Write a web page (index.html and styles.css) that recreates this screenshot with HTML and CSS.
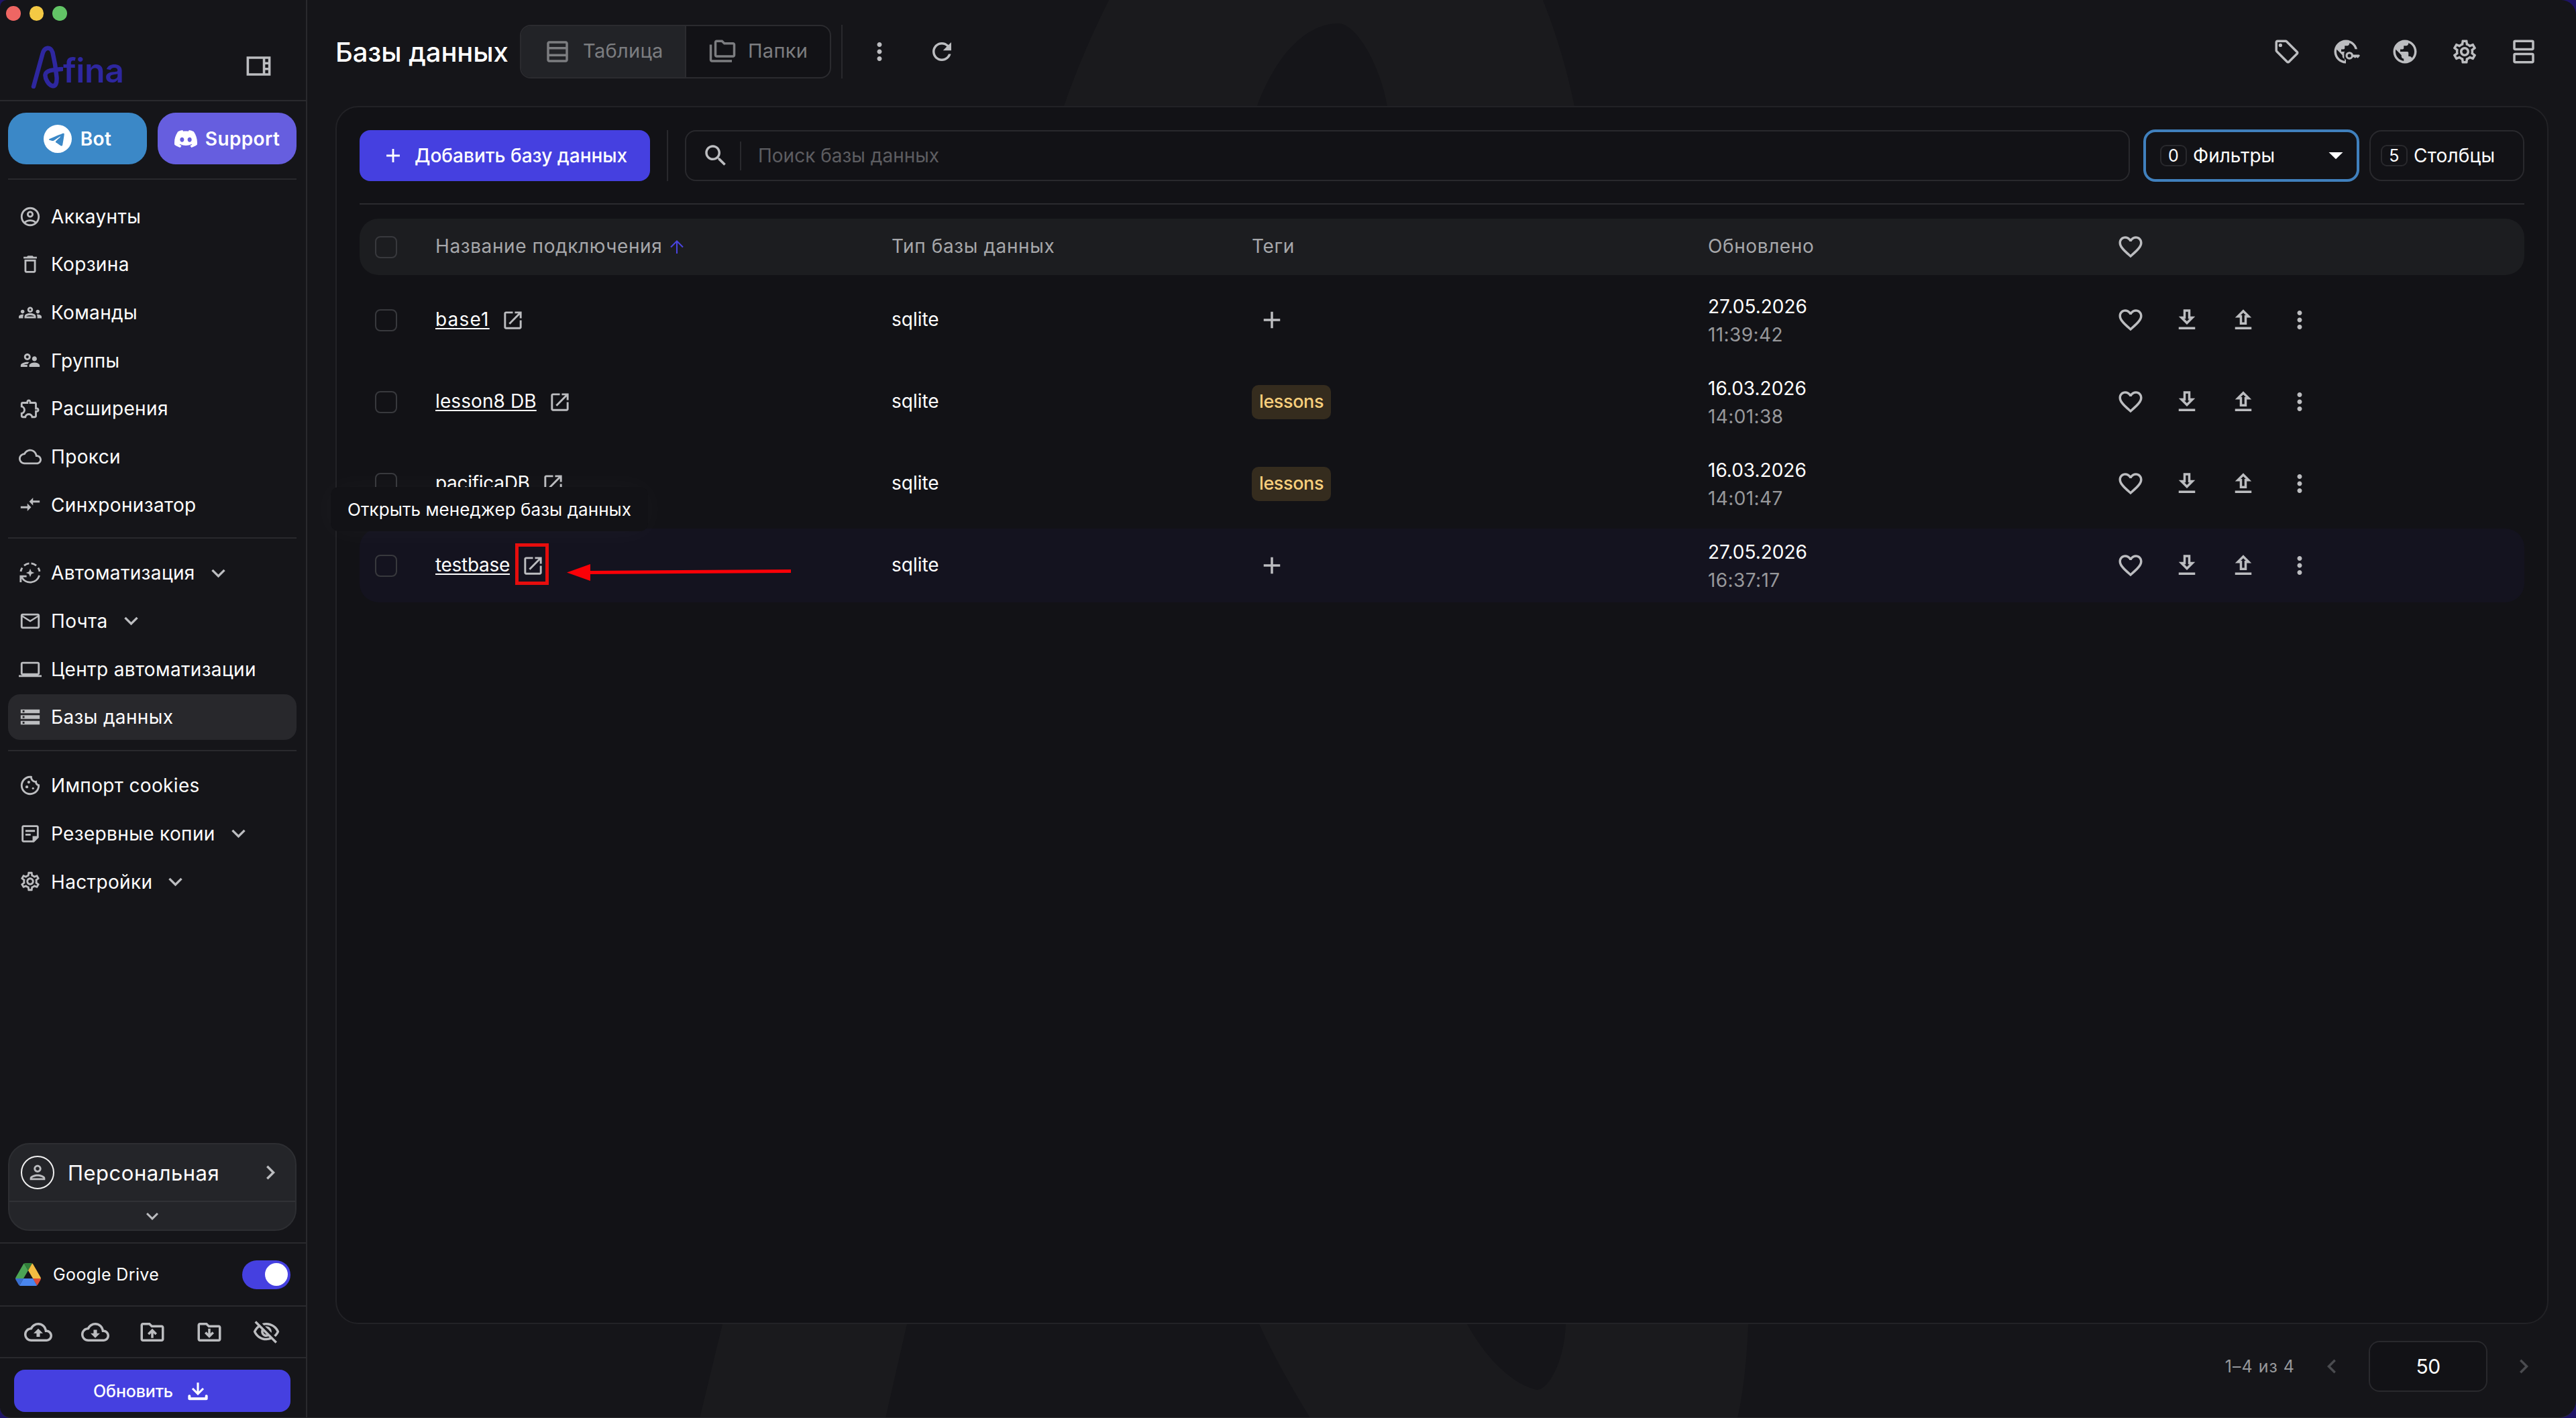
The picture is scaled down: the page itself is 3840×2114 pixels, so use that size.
FILE: index.html
```html
<!DOCTYPE html>
<html lang="ru">
<head>
<meta charset="utf-8">
<title>Afina — Базы данных</title>
<link rel="stylesheet" href="styles.css">
</head>
<body>
<svg class="sprite" aria-hidden="true">
  <symbol id="i-sidebar" viewBox="0 0 24 24"><path d="M2 4v16h20V4H2zm18 4.67h-2.5V6H20v2.67zm-2.5 2H20v2.67h-2.5v-2.67zM4 6h11.5v12H4V6zm13.5 12v-2.67H20V18h-2.5z"/></symbol>
  <symbol id="i-telegram" viewBox="0 0 24 24"><path d="M11.944 0A12 12 0 0 0 0 12a12 12 0 0 0 12 12 12 12 0 0 0 12-12A12 12 0 0 0 12 0a12 12 0 0 0-.056 0zm4.962 7.224c.1-.002.321.023.465.14a.506.506 0 0 1 .171.325c.016.093.036.306.02.472-.18 1.898-.962 6.502-1.36 8.627-.168.9-.499 1.201-.82 1.23-.696.065-1.225-.46-1.9-.902-1.056-.693-1.653-1.124-2.678-1.8-1.185-.78-.417-1.21.258-1.91.177-.184 3.247-2.977 3.307-3.23.007-.032.014-.15-.056-.212s-.174-.041-.249-.024c-.106.024-1.793 1.14-5.061 3.345-.48.33-.913.49-1.302.48-.428-.008-1.252-.241-1.865-.44-.752-.245-1.349-.374-1.297-.789.027-.216.325-.437.893-.663 3.498-1.524 5.83-2.529 6.998-3.014 3.332-1.386 4.025-1.627 4.476-1.635z"/></symbol>
  <symbol id="i-discord" viewBox="0 0 24 24"><path d="M20.317 4.3698a19.7913 19.7913 0 00-4.8851-1.5152.0741.0741 0 00-.0785.0371c-.211.3753-.4447.8648-.6083 1.2495-1.8447-.2762-3.68-.2762-5.4868 0-.1636-.3933-.4058-.8742-.6177-1.2495a.077.077 0 00-.0785-.037 19.7363 19.7363 0 00-4.8852 1.515.0699.0699 0 00-.0321.0277C.5334 9.0458-.319 13.5799.0992 18.0578a.0824.0824 0 00.0312.0561c2.0528 1.5076 4.0413 2.4228 5.9929 3.0294a.0777.0777 0 00.0842-.0276c.4616-.6304.8731-1.2952 1.226-1.9942a.076.076 0 00-.0416-.1057c-.6528-.2476-1.2743-.5495-1.8722-.8923a.077.077 0 01-.0076-.1277c.1258-.0943.2517-.1923.3718-.2914a.0743.0743 0 01.0776-.0105c3.9278 1.7933 8.18 1.7933 12.0614 0a.0739.0739 0 01.0785.0095c.1202.099.246.1981.3728.2924a.077.077 0 01-.0066.1276 12.2986 12.2986 0 01-1.873.8914.0766.0766 0 00-.0407.1067c.3604.698.7719 1.3628 1.225 1.9932a.076.076 0 00.0842.0286c1.961-.6067 3.9495-1.5219 6.0023-3.0294a.077.077 0 00.0313-.0552c.5004-5.177-.8382-9.6739-3.5485-13.6604a.061.061 0 00-.0312-.0286zM8.02 15.3312c-1.1825 0-2.1569-1.0857-2.1569-2.419 0-1.3332.9555-2.4189 2.157-2.4189 1.2108 0 2.1757 1.0952 2.1568 2.419 0 1.3332-.9555 2.4189-2.1569 2.4189zm7.9748 0c-1.1825 0-2.1569-1.0857-2.1569-2.419 0-1.3332.9554-2.4189 2.1569-2.4189 1.2108 0 2.1757 1.0952 2.1568 2.419 0 1.3332-.946 2.4189-2.1568 2.4189Z"/></symbol>
  <symbol id="i-account" viewBox="0 0 24 24"><path d="M12 2C6.48 2 2 6.48 2 12s4.48 10 10 10 10-4.48 10-10S17.52 2 12 2zM7.35 18.5C8.66 17.56 10.26 17 12 17s3.34.56 4.65 1.5c-1.31.94-2.91 1.5-4.65 1.5s-3.34-.56-4.65-1.5zm10.79-1.38C16.45 15.8 14.32 15 12 15s-4.45.8-6.14 2.12C4.7 15.73 4 13.95 4 12c0-4.42 3.58-8 8-8s8 3.58 8 8c0 1.95-.7 3.73-1.86 5.12zM12 6c-1.93 0-3.5 1.57-3.5 3.5S10.07 13 12 13s3.5-1.57 3.5-3.5S13.93 6 12 6zm0 5c-.83 0-1.5-.67-1.5-1.5S11.17 8 12 8s1.5.67 1.5 1.5S12.83 11 12 11z"/></symbol>
  <symbol id="i-trash" viewBox="0 0 24 24"><path d="M6 19c0 1.1.9 2 2 2h8c1.1 0 2-.9 2-2V7H6v12zM8 9h8v10H8V9zm7.5-5l-1-1h-5l-1 1H5v2h14V4z"/></symbol>
  <symbol id="i-teams" viewBox="0 0 24 24"><path d="M4 13c1.1 0 2-.9 2-2s-.9-2-2-2-2 .9-2 2 .9 2 2 2zm1.13 1.1C4.76 14.04 4.39 14 4 14c-.99 0-1.93.21-2.78.58C.48 14.9 0 15.62 0 16.43V18h4.5v-1.61c0-.83.23-1.61.63-2.29zM20 13c1.1 0 2-.9 2-2s-.9-2-2-2-2 .9-2 2 .9 2 2 2zm4 3.43c0-.81-.48-1.53-1.22-1.85-.85-.37-1.79-.58-2.78-.58-.39 0-.76.04-1.13.1.4.68.63 1.46.63 2.29V18H24v-1.57zM16.24 13.65C15.07 13.13 13.63 12.75 12 12.75s-3.07.39-4.24.9C6.68 14.13 6 15.21 6 16.39V18h12v-1.61c0-1.18-.68-2.26-1.76-2.74zM8.07 16c.09-.23.13-.39.91-.69.97-.38 1.99-.56 3.02-.56s2.05.18 3.02.56c.77.3.81.46.91.69H8.07zM12 8c.55 0 1 .45 1 1s-.45 1-1 1-1-.45-1-1 .45-1 1-1m0-2c-1.66 0-3 1.34-3 3s1.34 3 3 3 3-1.34 3-3-1.34-3-3-3z"/></symbol>
  <symbol id="i-groups" viewBox="0 0 24 24"><path d="M9 12c1.93 0 3.5-1.57 3.5-3.5S10.93 5 9 5 5.5 6.57 5.5 8.5 7.07 12 9 12zm0-5c.83 0 1.5.67 1.5 1.5S9.83 10 9 10s-1.5-.67-1.5-1.5S8.17 7 9 7zm.05 10H4.77c.99-.5 2.7-1 4.23-1 .11 0 .23.01.34.01.34-.73.93-1.33 1.64-1.81-.73-.13-1.42-.2-1.98-.2-2.34 0-7 1.17-7 3.5V19h7v-1.5c0-.17.02-.34.05-.5zM16.5 14.5c-1.84 0-5.5 1.01-5.5 3V19h11v-1.5c0-1.99-3.66-3-5.5-3zm1.21-1.82c.76-.43 1.29-1.24 1.29-2.18C19 9.12 17.88 8 16.5 8S14 9.12 14 10.5c0 .94.53 1.75 1.29 2.18.36.2.77.32 1.21.32s.85-.12 1.21-.32z"/></symbol>
  <symbol id="i-extension" viewBox="0 0 24 24"><path d="M10.5 4.5c.28 0 .5.22.5.5v2h6v6h2c.28 0 .5.22.5.5s-.22.5-.5.5h-2v6h-2.12c-.68-1.75-2.39-3-4.38-3s-3.7 1.25-4.38 3H4v-2.12c1.75-.68 3-2.39 3-4.38 0-1.99-1.24-3.7-2.99-4.38L4 7h6V5c0-.28.22-.5.5-.5m0-2C9.12 2.5 8 3.62 8 5H4c-1.1 0-1.99.9-1.99 2v3.8h.29c1.49 0 2.7 1.21 2.7 2.7s-1.21 2.7-2.7 2.7H2V20c0 1.1.9 2 2 2h3.8v-.3c0-1.49 1.21-2.7 2.7-2.7s2.7 1.21 2.7 2.7v.3H17c1.1 0 2-.9 2-2v-4c1.38 0 2.5-1.12 2.5-2.5S20.38 11 19 11V7c0-1.1-.9-2-2-2h-4c0-1.38-1.12-2.5-2.5-2.5z"/></symbol>
  <symbol id="i-cloud" viewBox="0 0 24 24"><path d="M19.35 10.04C18.67 6.59 15.64 4 12 4 9.11 4 6.6 5.64 5.35 8.04 2.34 8.36 0 10.91 0 14c0 3.31 2.69 6 6 6h13c2.76 0 5-2.24 5-5 0-2.64-2.05-4.78-4.65-4.96zM19 18H6c-2.21 0-4-1.79-4-4 0-2.05 1.53-3.76 3.56-3.97l1.07-.11.5-.95C8.08 7.14 9.94 6 12 6c2.62 0 4.88 1.86 5.39 4.43l.3 1.5 1.53.11c1.56.1 2.78 1.41 2.78 2.96 0 1.65-1.35 3-3 3z"/></symbol>
  <symbol id="i-compare" viewBox="0 0 24 24"><path d="M9.01 14H2v2h7.01v3L13 15l-3.99-4v3zm5.98-1v-3H22V8h-7.01V5L11 9l3.99 4z"/></symbol>
  <symbol id="i-auto" viewBox="0 0 24 24"><path d="M12 7.6l1.25 3.15L16.4 12l-3.15 1.25L12 16.4l-1.25-3.15L7.6 12l3.15-1.25z"/><g fill="none" stroke="currentColor" stroke-width="2"><path d="M2.1 10.6A10 10 0 0 1 3.6 6.7M5.6 4.3A10 10 0 0 1 10.9 2.05M13.1 2.05A10 10 0 0 1 18.4 4.3M20.4 6.7A10 10 0 0 1 21.9 10.6M21.6 14.8A10 10 0 0 1 3 16.4M2 21.8V15.6H8.2"/></g></symbol>
  <symbol id="i-mail" viewBox="0 0 24 24"><path d="M22 6c0-1.1-.9-2-2-2H4c-1.1 0-2 .9-2 2v12c0 1.1.9 2 2 2h16c1.1 0 2-.9 2-2V6zm-2 0l-8 5-8-5h16zm0 12H4V8l8 5 8-5v10z"/></symbol>
  <symbol id="i-laptop" viewBox="0 0 24 24"><path d="M20 18c1.1 0 2-.9 2-2V6c0-1.1-.9-2-2-2H4c-1.1 0-2 .9-2 2v10c0 1.1.9 2 2 2H0v2h24v-2h-4zM4 6h16v10H4V6z"/></symbol>
  <symbol id="i-storage" viewBox="0 0 24 24"><path d="M2 20h20v-4H2v4zm2-3h2v2H4v-2zM2 4v4h20V4H2zm4 3H4V5h2v2zm-4 7h20v-4H2v4zm2-3h2v2H4v-2z"/></symbol>
  <symbol id="i-cookie" viewBox="0 0 24 24"><circle cx="10.5" cy="8.5" r="1.5"/><circle cx="8.5" cy="13.5" r="1.5"/><circle cx="15" cy="15" r="1.1"/><path d="M21.95 10.99c-1.79-.03-3.7-1.95-2.68-4.22-2.98 1-5.77-1.59-5.19-4.56C6.95.71 2 6.58 2 12c0 5.52 4.48 10 10 10 5.89 0 10.54-5.08 9.95-11.01zM12 20c-4.41 0-8-3.59-8-8 0-3.31 2.73-8.18 8.08-8.02.42 2.54 2.44 4.56 4.99 4.94.07.36.52 2.55 2.92 3.63C19.7 16.86 16.06 20 12 20z"/></symbol>
  <symbol id="i-note" viewBox="0 0 24 24"><path fill-rule="evenodd" d="M5 3h14c1.1 0 2 .9 2 2v11l-5 5H5c-1.1 0-2-.9-2-2V5c0-1.1.9-2 2-2zm0 2v14h9.5v-4.5H19V5H5z"/><path d="M7 8h10v2H7zM7 12h5.5v2H7z"/></symbol>
  <symbol id="i-settings" viewBox="0 0 24 24"><path d="M19.43 12.98c.04-.32.07-.64.07-.98s-.03-.66-.07-.98l2.11-1.65c.19-.15.24-.42.12-.64l-2-3.46c-.09-.16-.26-.25-.44-.25-.06 0-.12.01-.17.03l-2.49 1c-.52-.4-1.08-.73-1.69-.98l-.38-2.65C14.46 2.18 14.25 2 14 2h-4c-.25 0-.46.18-.49.42l-.38 2.65c-.61.25-1.17.59-1.69.98l-2.49-1c-.06-.02-.12-.03-.18-.03-.17 0-.34.09-.43.25l-2 3.46c-.13.22-.07.49.12.64l2.11 1.65c-.04.32-.07.65-.07.98s.03.66.07.98l-2.11 1.65c-.19.15-.24.42-.12.64l2 3.46c.09.16.26.25.44.25.06 0 .12-.01.17-.03l2.49-1c.52.4 1.08.73 1.69.98l.38 2.65c.03.24.24.42.49.42h4c.25 0 .46-.18.49-.42l.38-2.65c.61-.25 1.17-.59 1.69-.98l2.49 1c.06.02.12.03.18.03.17 0 .34-.09.43-.25l2-3.46c.12-.22.07-.49-.12-.64l-2.11-1.65zm-1.98-1.71c.04.31.05.52.05.73 0 .21-.02.43-.05.73l-.14 1.13.89.7 1.08.84-.7 1.21-1.27-.51-1.04-.42-.9.68c-.43.32-.84.56-1.25.73l-1.06.43-.16 1.13-.2 1.35h-1.4l-.19-1.35-.16-1.13-1.06-.43c-.43-.18-.83-.41-1.23-.71l-.91-.7-1.06.43-1.27.51-.7-1.21 1.08-.84.89-.7-.14-1.13c-.03-.31-.05-.54-.05-.74s.02-.43.05-.73l.14-1.13-.89-.7-1.08-.84.7-1.21 1.27.51 1.04.42.9-.68c.43-.32.84-.56 1.25-.73l1.06-.43.16-1.13.2-1.35h1.39l.19 1.35.16 1.13 1.06.43c.43.18.83.41 1.23.71l.91.7 1.06-.43 1.27-.51.7 1.21-1.07.85-.89.7.14 1.13zM12 8c-2.21 0-4 1.79-4 4s1.79 4 4 4 4-1.79 4-4-1.79-4-4-4zm0 6c-1.1 0-2-.9-2-2s.9-2 2-2 2 .9 2 2-.9 2-2 2z"/></symbol>
  <symbol id="i-down" viewBox="0 0 24 24"><path d="M7.41 8.59L12 13.17l4.59-4.58L18 10l-6 6-6-6 1.41-1.41z"/></symbol>
  <symbol id="i-right" viewBox="0 0 24 24"><path d="M8.59 16.59L13.17 12 8.59 7.41 10 6l6 6-6 6-1.41-1.41z"/></symbol>
  <symbol id="i-left" viewBox="0 0 24 24"><path d="M15.41 16.59L10.83 12l4.58-4.59L14 6l-6 6 6 6 1.41-1.41z"/></symbol>
  <symbol id="i-person" viewBox="0 0 24 24"><path d="M12 6c1.1 0 2 .9 2 2s-.9 2-2 2-2-.9-2-2 .9-2 2-2m0 10c2.7 0 5.8 1.29 6 2H6c.23-.72 3.31-2 6-2m0-12C9.79 4 8 5.79 8 8s1.79 4 4 4 4-1.79 4-4-1.79-4-4-4zm0 10c-2.67 0-8 1.34-8 4v2h16v-2c0-2.66-5.33-4-8-4z"/></symbol>
  <symbol id="i-drive" viewBox="0 0 87.3 78"><path fill="#3a6fd0" d="m6.6 66.85 3.85 6.65c.8 1.4 1.95 2.5 3.3 3.3l13.75-23.8h-27.5c0 1.55.4 3.1 1.2 4.5z"/><path fill="#4ca455" d="m43.65 25-13.75-23.8c-1.35.8-2.5 1.9-3.3 3.3l-25.4 44a9.06 9.06 0 0 0 -1.2 4.5h27.5z"/><path fill="#dc4b37" d="m73.55 76.8c1.35-.8 2.5-1.9 3.3-3.3l1.6-2.75 7.65-13.25c.8-1.4 1.2-2.95 1.2-4.5h-27.502l5.852 11.5z"/><path fill="#32803a" d="m43.65 25 13.75-23.8c-1.35-.8-2.9-1.2-4.5-1.2h-18.5c-1.6 0-3.15.45-4.5 1.2z"/><path fill="#4a86ee" d="m59.8 53h-32.3l-13.75 23.8c1.35.8 2.9 1.2 4.5 1.2h50.8c1.6 0 3.15-.45 4.5-1.2z"/><path fill="#f3bc42" d="m73.4 26.5-12.7-22c-.8-1.4-1.95-2.5-3.3-3.3l-13.75 23.8 16.15 28h27.45c0-1.55-.4-3.1-1.2-4.5z"/></symbol>
  <symbol id="i-folder" viewBox="0 0 24 24"><path d="M20 6h-8l-2-2H4c-1.1 0-1.99.9-1.99 2L2 18c0 1.1.9 2 2 2h16c1.1 0 2-.9 2-2V8c0-1.1-.9-2-2-2zm0 12H4V6h5.17l2 2H20v10z"/></symbol>
  <symbol id="i-folder-up" viewBox="0 0 24 24"><use href="#i-folder"/><path d="M9.41 14.42 11 12.84V17h2v-4.16l1.59 1.59L16 13.01 12.01 9 8 13.01z"/></symbol>
  <symbol id="i-folder-down" viewBox="0 0 24 24"><use href="#i-folder"/><path d="M14.59 11.58 13 13.16V9h-2v4.16l-1.59-1.59L8 12.99 11.99 17 16 12.99z"/></symbol>
  <symbol id="i-cloud-up" viewBox="0 0 24 24"><use href="#i-cloud"/><path d="M8 13h2.55v3h2.9v-3H16l-4-4z"/></symbol>
  <symbol id="i-cloud-down" viewBox="0 0 24 24"><use href="#i-cloud"/><path d="M13.45 10h-2.9v3H8l4 4 4-4h-2.55z"/></symbol>
  <symbol id="i-eye-off" viewBox="0 0 24 24"><path d="M12 6c3.79 0 7.17 2.13 8.82 5.5-.59 1.22-1.42 2.27-2.41 3.12l1.41 1.41c1.39-1.23 2.49-2.77 3.18-4.53C21.27 7.11 17 4 12 4c-1.27 0-2.49.2-3.64.57l1.65 1.65C10.66 6.09 11.32 6 12 6zm-1.07 1.14L13 9.21c.57.25 1.03.71 1.28 1.28l2.07 2.07c.08-.34.14-.7.14-1.07C16.5 9.01 14.48 7 12 7c-.37 0-.72.05-1.07.14zM2.01 3.87l2.68 2.68C3.06 7.83 1.77 9.53 1 11.5 2.73 15.89 7 19 12 19c1.52 0 2.98-.29 4.32-.82l3.42 3.42 1.41-1.41L3.42 2.45 2.01 3.87zm7.5 7.5l2.61 2.61c-.04.01-.08.02-.12.02-1.38 0-2.5-1.12-2.5-2.5 0-.05.01-.08.01-.13zm-3.4-3.4l1.75 1.75c-.23.55-.36 1.15-.36 1.78 0 2.48 2.02 4.5 4.5 4.5.63 0 1.23-.13 1.77-.36l.98.98c-.88.24-1.8.38-2.75.38-3.79 0-7.17-2.13-8.82-5.5.7-1.43 1.72-2.61 2.93-3.53z"/></symbol>
  <symbol id="i-install" viewBox="0 0 24 24"><g fill="none" stroke="currentColor" stroke-width="2.3"><path d="M12 2.5V14.5M6 9l6 6 6-6"/><path stroke-width="3" stroke-linecap="round" stroke-linejoin="round" d="M2.5 17.5v3h19v-3"/></g></symbol>
  <symbol id="i-table" viewBox="0 0 24 24"><path fill-rule="evenodd" d="M5 3h14c1.1 0 2 .9 2 2v14c0 1.1-.9 2-2 2H5c-1.1 0-2-.9-2-2V5c0-1.1.9-2 2-2zm0 2v3h14V5zm0 5v4h14v-4zm0 6v3h14v-3z"/></symbol>
  <symbol id="i-folders" viewBox="0 0 24 24"><path d="M3 19h17v2H3c-1.1 0-2-.9-2-2V6h2v13z"/><path d="M23 6v9c0 1.1-.9 2-2 2H7c-1.1 0-2-.9-2-2l.01-11c0-1.1.89-2 1.99-2h5l2 2h7c1.1 0 2 .9 2 2zM7 15h14V6h-7.83l-2-2H7v11z"/></symbol>
  <symbol id="i-more" viewBox="0 0 24 24"><path d="M12 8c1.1 0 2-.9 2-2s-.9-2-2-2-2 .9-2 2 .9 2 2 2zm0 2c-1.1 0-2 .9-2 2s.9 2 2 2 2-.9 2-2-.9-2-2-2zm0 6c-1.1 0-2 .9-2 2s.9 2 2 2 2-.9 2-2-.9-2-2-2z"/></symbol>
  <symbol id="i-refresh" viewBox="0 0 24 24"><path d="M17.65 6.35C16.2 4.9 14.21 4 12 4c-4.42 0-7.99 3.58-7.99 8s3.57 8 7.99 8c3.73 0 6.84-2.55 7.73-6h-2.08c-.82 2.33-3.04 4-5.65 4-3.31 0-6-2.69-6-6s2.69-6 6-6c1.66 0 3.14.69 4.22 1.78L13 11h7V4l-2.35 2.35z"/></symbol>
  <symbol id="i-tag" viewBox="0 0 24 24"><circle cx="6.5" cy="6.5" r="1.5"/><path d="M21.41 11.58l-9-9C12.05 2.22 11.55 2 11 2H4c-1.1 0-2 .9-2 2v7c0 .55.22 1.05.59 1.42l9 9c.36.36.86.58 1.41.58s1.05-.22 1.41-.59l7-7c.37-.36.59-.86.59-1.41s-.23-1.06-.59-1.42zM13 20.01L4 11V4h7v-.01l9 9-7 7.02z"/></symbol>
  <symbol id="i-globe" viewBox="0 0 24 24"><path d="M12 2C6.48 2 2 6.48 2 12s4.48 10 10 10 10-4.48 10-10S17.52 2 12 2zm-1 17.93c-3.95-.49-7-3.85-7-7.93 0-.62.08-1.21.21-1.79L9 15v1c0 1.1.9 2 2 2v1.93zm6.9-2.54c-.26-.81-1-1.39-1.9-1.39h-1v-3c0-.55-.45-1-1-1H8v-2h2c.55 0 1-.45 1-1V7h2c1.1 0 2-.9 2-2v-.41c2.93 1.19 5 4.06 5 7.41 0 2.08-.8 3.97-2.1 5.39z"/></symbol>
  <symbol id="i-globe-key" viewBox="0 0 24 24"><clipPath id="globe-cut"><path d="M0 0H24V9.8H14.5L10.5 12.5V17.5L12 19V24H0z"/></clipPath><g clip-path="url(#globe-cut)"><use href="#i-globe"/></g><circle cx="15" cy="15.4" r="2.4" fill="none" stroke="currentColor" stroke-width="1.8"/><path d="M17 14.5h6.2l.8.9-1.8 2.2-1.2-.9-1.2.9-1-.9H17z"/></symbol>
  <symbol id="i-agenda" viewBox="0 0 24 24"><g fill="none" stroke="currentColor" stroke-width="2"><rect x="4" y="3" width="16" height="7" rx=".8"/><rect x="4" y="14" width="16" height="7" rx=".8"/></g></symbol>
  <symbol id="i-plus" viewBox="0 0 24 24"><path d="M19 13h-6v6h-2v-6H5v-2h6V5h2v6h6v2z"/></symbol>
  <symbol id="i-search" viewBox="0 0 24 24"><path d="M15.5 14h-.79l-.28-.27C15.41 12.59 16 11.11 16 9.5 16 5.91 13.09 3 9.5 3S3 5.91 3 9.5 5.91 16 9.5 16c1.61 0 3.09-.59 4.23-1.57l.27.28v.79l5 4.99L20.49 19l-4.99-5zm-6 0C7.01 14 5 11.99 5 9.5S7.01 5 9.5 5 14 7.01 14 9.5 11.99 14 9.5 14z"/></symbol>
  <symbol id="i-caret" viewBox="0 0 24 24"><path d="M6 9.2h12L12 15z"/></symbol>
  <symbol id="i-sort" viewBox="0 0 24 24"><path fill="none" stroke="currentColor" stroke-width="2" d="M12 22V3.5M3 12.5L12 3.5l9 9"/></symbol>
  <symbol id="i-heart" viewBox="0 0 24 24"><path d="M16.5 3c-1.74 0-3.41.81-4.5 2.09C10.91 3.81 9.24 3 7.5 3 4.42 3 2 5.42 2 8.5c0 3.78 3.4 6.86 8.55 11.54L12 21.35l1.45-1.32C18.6 15.36 22 12.28 22 8.5 22 5.42 19.58 3 16.5 3zm-4.4 15.55l-.1.1-.1-.1C7.14 14.24 4 11.39 4 8.5 4 6.5 5.5 5 7.5 5c1.54 0 3.04.99 3.57 2.36h1.87C13.46 5.99 14.96 5 16.5 5c2 0 3.5 1.5 3.5 3.5 0 2.89-3.14 5.74-7.9 10.05z"/></symbol>
  <symbol id="i-download" viewBox="0 0 24 24"><path d="M19 9h-4V3H9v6H5l7 7 7-7zm-8 2V5h2v6h1.17L12 13.17 9.83 11H11zm-6 7h14v2H5z"/></symbol>
  <symbol id="i-upload" viewBox="0 0 24 24"><path d="M9 16h6v-6h4l-7-7-7 7h4v6zm3-10.17L14.17 8H13v6h-2V8H9.83L12 5.83zM5 18h14v2H5z"/></symbol>
  <symbol id="i-open" viewBox="0 0 24 24"><path d="M19 19H5V5h7V3H5c-1.11 0-2 .9-2 2v14c0 1.1.89 2 2 2h14c1.1 0 2-.9 2-2v-7h-2v7zM14 3v2h3.59l-9.83 9.83 1.41 1.41L19 6.41V10h2V3h-7z"/></symbol>
</svg>

<div class="app">
  <aside class="sidebar">
    <header class="brand">
      <div class="lights"><i class="light red"></i><i class="light yellow"></i><i class="light green"></i></div>
      <div class="brand-row">
        <div class="logo">
          <svg class="logo-mark" viewBox="0 0 50 70"><path d="M6 67L19.5 18C22 8.5 31.5 6 34.5 16.5C37 27 39.5 42 40.5 53C41 62 39 67 34 66C28 64.5 23 55 23.5 49.5C24.5 43 34 42 48 41"/></svg>
          <span class="logo-text">fina</span>
        </div>
        <svg class="icon lg"><use href="#i-sidebar"/></svg>
      </div>
    </header>

    <div class="social">
      <a class="pill bot"><svg class="icon tg"><use href="#i-telegram"/></svg><span>Bot</span></a>
      <a class="pill support"><svg class="icon dc"><use href="#i-discord"/></svg><span>Support</span></a>
    </div>

    <nav class="nav">
      <a class="item"><svg class="icon sm"><use href="#i-account"/></svg><span>Аккаунты</span></a>
      <a class="item"><svg class="icon sm"><use href="#i-trash"/></svg><span>Корзина</span></a>
      <a class="item"><svg class="icon sm"><use href="#i-teams"/></svg><span>Команды</span></a>
      <a class="item"><svg class="icon sm"><use href="#i-groups"/></svg><span>Группы</span></a>
      <a class="item"><svg class="icon sm"><use href="#i-extension"/></svg><span>Расширения</span></a>
      <a class="item"><svg class="icon sm"><use href="#i-cloud"/></svg><span>Прокси</span></a>
      <a class="item"><svg class="icon sm"><use href="#i-compare"/></svg><span>Синхронизатор</span></a>
      <hr>
      <a class="item"><svg class="icon sm"><use href="#i-auto"/></svg><span>Автоматизация</span><svg class="icon chev"><use href="#i-down"/></svg></a>
      <a class="item"><svg class="icon sm"><use href="#i-mail"/></svg><span>Почта</span><svg class="icon chev"><use href="#i-down"/></svg></a>
      <a class="item"><svg class="icon sm"><use href="#i-laptop"/></svg><span>Центр автоматизации</span></a>
      <a class="item active"><svg class="icon sm"><use href="#i-storage"/></svg><span>Базы данных</span></a>
      <hr>
      <a class="item"><svg class="icon sm"><use href="#i-cookie"/></svg><span>Импорт cookies</span></a>
      <a class="item"><svg class="icon sm"><use href="#i-note"/></svg><span>Резервные копии</span><svg class="icon chev"><use href="#i-down"/></svg></a>
      <a class="item"><svg class="icon sm"><use href="#i-settings"/></svg><span>Настройки</span><svg class="icon chev"><use href="#i-down"/></svg></a>
    </nav>

    <footer class="side-foot">
      <div class="workspace">
        <div class="ws-main">
          <span class="avatar"><svg class="icon sm"><use href="#i-person"/></svg></span>
          <span class="ws-name">Персональная</span>
          <svg class="icon"><use href="#i-right"/></svg>
        </div>
        <div class="ws-more"><svg class="icon mini"><use href="#i-down"/></svg></div>
      </div>
      <div class="drive">
        <svg class="drive-logo"><use href="#i-drive"/></svg>
        <span class="drive-name">Google Drive</span>
        <span class="switch"><i></i></span>
      </div>
      <div class="tools">
        <svg class="icon"><use href="#i-cloud-up"/></svg>
        <svg class="icon"><use href="#i-cloud-down"/></svg>
        <svg class="icon"><use href="#i-folder-up"/></svg>
        <svg class="icon"><use href="#i-folder-down"/></svg>
        <svg class="icon"><use href="#i-eye-off"/></svg>
      </div>
      <div class="update"><a class="update-btn"><span>Обновить</span><svg class="icon inst"><use href="#i-install"/></svg></a></div>
    </footer>
  </aside>

  <main class="main">
    <svg class="watermark" viewBox="0 0 3382 2114"><path fill-rule="evenodd" d="M1195 0H1842C1862 50 1878 104 1889 158L2140 1700C2150 1800 2150 1900 2148 1974C2146 2030 2140 2080 2132 2114H1495C1465 2065 1440 2020 1419 1974L1280 900L1300 700L1610 158C1600 100 1565 35 1537 35C1490 35 1445 80 1416 158L894 1974L862 2114H585L619 1974L1128 158C1148 100 1170 50 1195 0zM1729 1974L1850 1700L1876 1974C1874 2030 1850 2072 1833 2072C1800 2065 1760 2030 1729 1974z"/></svg>

    <header class="top">
      <h1>Базы данных</h1>
      <div class="segments">
        <a class="seg on"><svg class="icon"><use href="#i-table"/></svg><span>Таблица</span></a>
        <a class="seg"><svg class="icon"><use href="#i-folders"/></svg><span>Папки</span></a>
      </div>
      <i class="vline"></i>
      <svg class="icon kebab"><use href="#i-more"/></svg>
      <svg class="icon reload"><use href="#i-refresh"/></svg>
      <div class="top-icons">
        <svg class="icon"><use href="#i-tag"/></svg>
        <svg class="icon"><use href="#i-globe-key"/></svg>
        <svg class="icon"><use href="#i-globe"/></svg>
        <svg class="icon"><use href="#i-settings"/></svg>
        <svg class="icon"><use href="#i-agenda"/></svg>
      </div>
    </header>

    <section class="panel">
      <div class="toolbar">
        <a class="add"><svg class="icon sm"><use href="#i-plus"/></svg><span>Добавить базу данных</span></a>
        <i class="vline"></i>
        <div class="search"><svg class="icon"><use href="#i-search"/></svg><i class="vline short"></i><span>Поиск базы данных</span></div>
        <a class="filter focus"><b class="count">0</b><span>Фильтры</span><svg class="icon caret"><use href="#i-caret"/></svg></a>
        <a class="filter cols"><b class="count">5</b><span>Столбцы</span></a>
      </div>

      <div class="table">
        <div class="row head">
          <i class="check"></i>
          <span class="sorted"><span>Название подключения</span><svg class="icon sort"><use href="#i-sort"/></svg></span>
          <span>Тип базы данных</span>
          <span>Теги</span>
          <span>Обновлено</span>
          <span class="actions"><svg class="icon"><use href="#i-heart"/></svg></span>
        </div>
        <div class="row">
          <i class="check"></i>
          <span class="name"><a class="loose">base1</a><svg class="icon open"><use href="#i-open"/></svg></span>
          <span>sqlite</span>
          <span class="add-tag"><svg class="icon"><use href="#i-plus"/></svg></span>
          <span class="when"><b>27.05.2026</b><small>11:39:42</small></span>
          <span class="actions"><svg class="icon"><use href="#i-heart"/></svg><svg class="icon"><use href="#i-download"/></svg><svg class="icon"><use href="#i-upload"/></svg><svg class="icon"><use href="#i-more"/></svg></span>
        </div>
        <div class="row">
          <i class="check"></i>
          <span class="name"><a>lesson8 DB</a><svg class="icon open"><use href="#i-open"/></svg></span>
          <span>sqlite</span>
          <span><em class="tag">lessons</em></span>
          <span class="when"><b>16.03.2026</b><small>14:01:38</small></span>
          <span class="actions"><svg class="icon"><use href="#i-heart"/></svg><svg class="icon"><use href="#i-download"/></svg><svg class="icon"><use href="#i-upload"/></svg><svg class="icon"><use href="#i-more"/></svg></span>
        </div>
        <div class="row">
          <i class="check"></i>
          <span class="name"><a class="tight">pacificaDB</a><svg class="icon open"><use href="#i-open"/></svg></span>
          <span>sqlite</span>
          <span><em class="tag">lessons</em></span>
          <span class="when"><b>16.03.2026</b><small>14:01:47</small></span>
          <span class="actions"><svg class="icon"><use href="#i-heart"/></svg><svg class="icon"><use href="#i-download"/></svg><svg class="icon"><use href="#i-upload"/></svg><svg class="icon"><use href="#i-more"/></svg></span>
        </div>
        <div class="row hover">
          <i class="check"></i>
          <span class="name"><a class="tight">testbase</a><svg class="icon open"><use href="#i-open"/></svg></span>
          <span>sqlite</span>
          <span class="add-tag"><svg class="icon"><use href="#i-plus"/></svg></span>
          <span class="when"><b>27.05.2026</b><small>16:37:17</small></span>
          <span class="actions"><svg class="icon"><use href="#i-heart"/></svg><svg class="icon"><use href="#i-download"/></svg><svg class="icon"><use href="#i-upload"/></svg><svg class="icon"><use href="#i-more"/></svg></span>
        </div>
      </div>
    </section>

    <footer class="pager">
      <span class="range">1–4 из 4</span>
      <svg class="icon prev"><use href="#i-left"/></svg>
      <span class="size">50</span>
      <svg class="icon"><use href="#i-right"/></svg>
    </footer>
  </main>

  <div class="tooltip"><span>Открыть менеджер базы данных</span></div>
  <div class="mark-box"></div>
  <svg class="mark-arrow" viewBox="0 0 336 26"><path d="M33 13.5L334 11.5" /><path class="tip" d="M0 13.5L35 1V26z"/></svg>
</div>
</body>
</html>
```
FILE: styles.css
```css
* { box-sizing: border-box; }

body {
  margin: 0;
  background: #1e1466;
  color: #fff;
  font-family: Inter, "Noto Sans", sans-serif;
  font-size: 28px;
  line-height: 1.2;
}

h1, hr { margin: 0; }
i, em { font-style: normal; }
a { color: inherit; }

.sprite { position: absolute; width: 0; height: 0; }

.icon {
  flex: none;
  width: 42px;
  height: 42px;
  color: #bcbdc0;
  fill: currentColor;
}
.icon.sm { width: 34px; height: 34px; }

.app {
  position: relative;
  display: flex;
  width: 3840px;
  height: 2114px;
  overflow: hidden;
  background: #151519;
  border-bottom: 1px solid #29292d;
  border-radius: 10px 22px 26px 16px;
}

/* Sidebar */
.sidebar {
  display: flex;
  flex: none;
  flex-direction: column;
  width: 458px;
  border-right: 2px solid #29292d;
}

.brand { height: 151px; border-bottom: 2px solid #29292d; }
.lights { display: flex; gap: 13px; padding: 9px 0 0 9px; }
.light { width: 21.5px; height: 21.5px; border-radius: 50%; }
.light.red { background: #ee6663; }
.light.yellow { background: #f4c944; }
.light.green { background: #62c466; }
.brand-row { display: flex; align-items: center; justify-content: space-between; padding: 32px 49px 0 44px; height: 104px; }
.logo { display: flex; height: 70px; margin-top: -3px; }
.logo-mark { width: 50px; height: 70px; fill: none; stroke: #2e279f; stroke-width: 6.5; stroke-linecap: round; stroke-linejoin: round; }
.logo-text { padding-top: 13px; color: #2e279f; font-size: 50px; font-weight: 600; letter-spacing: -.4px; line-height: 60px; }
.icon.lg { width: 43px; height: 43px; }

.social { display: flex; gap: 16px; margin: 17px 14px 0 12px; padding-bottom: 21px; border-bottom: 2px solid #29292d; }
.pill {
  display: flex;
  flex: 1;
  align-items: center;
  justify-content: center;
  height: 77px;
  border-radius: 27px;
  font-weight: 600;
  letter-spacing: .35px;
}
.pill span { padding-top: 2px; }
.pill .icon { color: #fff; }
.bot { gap: 13px; background: #3b88c7; }
.support { gap: 12px; background: #665edf; }
.icon.dc { width: 34px; height: 34px; }

.nav { display: flex; flex-direction: column; gap: 3.67px; padding: 20.5px 14px 0 12px; }
.nav hr { width: 100%; border: 0; border-top: 2px solid #29292d; margin: 11px 0 13.5px; }
.item { display: flex; align-items: center; height: 68px; padding-left: 16px; gap: 14px; border-radius: 18px; letter-spacing: .35px; }
.item span { padding-top: 2px; }
.item .chev { width: 41px; height: 41px; }
.active { background: #28282c; }

.side-foot { margin-top: auto; }
.workspace { margin: 0 14px 17px 12px; height: 131px; border: 2px solid #2d2e32; border-radius: 32px; background: #242529; }
.ws-main { display: flex; align-items: center; height: 86px; padding: 0 16px 0 17px; border-bottom: 2px solid #313236; }
.avatar { display: flex; align-items: center; justify-content: center; width: 50px; height: 50px; border: 2px solid #f0f0f0; border-radius: 50%; }
.ws-name { flex: 1; margin-left: 20px; padding-top: 2px; font-size: 31px; letter-spacing: .5px; }
.ws-more { display: flex; justify-content: center; padding-top: 3px; }
.icon.mini { width: 36px; height: 36px; }
.drive { display: flex; align-items: center; height: 94px; padding: 0 23px; border-top: 2px solid #29292d; }
.drive-logo { width: 38px; height: 36px; }
.drive-name { flex: 1; margin-left: 18px; font-size: 25px; letter-spacing: .38px; }
.switch { display: flex; justify-content: flex-end; align-items: center; width: 72px; height: 43px; padding-right: 4px; border-radius: 22px; background: #4540e0; }
.switch i { width: 34px; height: 34px; border-radius: 50%; background: #fff; }
.tools { display: flex; gap: 43px; height: 77px; align-items: center; padding-left: 36px; border-top: 2px solid #29292d; }
.update { height: 90px; padding: 17px 23px 0 21px; border-top: 2px solid #29292d; }
.update-btn { display: flex; align-items: center; justify-content: center; gap: 21px; height: 63px; padding-right: 4px; border-radius: 16px; background: #4540e0; font-size: 25px; font-weight: 500; letter-spacing: -.15px; }
.icon.inst { width: 32px; height: 32px; color: #fff; }

/* Main area */
.main { position: relative; flex: 1; display: flex; flex-direction: column; padding: 0 41px 0 42px; }
.watermark { position: absolute; inset: 0; width: 3382px; height: 2114px; fill: #1a1a1d; }
.main > :not(.watermark) { position: relative; }

.top { display: flex; align-items: center; height: 158px; padding-bottom: 5px; }
.top h1 { width: 275px; padding-top: 2px; font-size: 40px; font-weight: 500; letter-spacing: -.1px; white-space: nowrap; }
.segments { display: flex; width: 464px; height: 80px; overflow: hidden; border: 2px solid #2b2b2f; border-radius: 16px; background: #121216; color: #7c7d80; font-size: 29px; letter-spacing: .3px; }
.seg { display: flex; align-items: center; gap: 17px; padding-left: 33px; }
.seg.on { width: 246px; background: #222327; border-right: 2px solid #2b2b2f; }
.seg .icon { color: #7c7d80; }
.vline { width: 2px; height: 76px; background: #29292d; }
.top .vline { margin-left: 15px; height: 80px; }
.kebab { margin-left: 34px; }
.reload { margin-left: 51px; }
.top-icons { display: flex; gap: 46.3px; margin-left: auto; padding-right: 16px; }

.panel { flex: none; height: 1816px; padding: 34px; border: 2px solid #222226; border-radius: 34px; background: #121216; }
.toolbar { display: flex; height: 111px; margin-bottom: 21px; border-bottom: 2px solid #2b2b2f; }
.toolbar > * { height: 76px; }
.toolbar span { padding-top: 2px; }
.add { display: flex; align-items: center; gap: 15px; width: 433px; padding-left: 33px; border-radius: 16px; background: #4540e0; font-weight: 500; }
.add .icon { color: #fff; }
.toolbar > .vline { margin: 0 25px; }
.search { display: flex; flex: 1; align-items: center; padding-left: 23px; border: 2px solid #29292d; border-radius: 16px; color: #5d5d61; }
.search .vline { height: 43px; margin: 0 25px 0 15px; }
.filter { display: flex; align-items: center; gap: 9px; border: 2px solid #29292d; border-radius: 18px; }
.focus { width: 322px; margin: -1px 15px 0 20px; height: 78px; padding-left: 21px; border: 4px solid #4080bd; }
.cols { width: 231px; padding-left: 15px; letter-spacing: .2px; }
.count { display: flex; align-items: center; justify-content: center; width: 40px; height: 32px; border: 2px solid #29292d; border-radius: 9px; font-size: 25px; font-weight: 400; }
.icon.caret { margin: 0 10px 0 auto; color: #fff; }

.table { display: flex; flex-direction: column; gap: 12px; }
.row { display: grid; grid-template-columns: 90px 680px 537px 680px 609px 1fr; align-items: center; height: 110px; padding-left: 23px; border-radius: 28px; }
.head { height: 84px; background: #1c1d20; color: #a6a7aa; letter-spacing: .6px; }
.hover { background: #14131f; }
.check { width: 33px; height: 33px; border: 2px solid #38393d; border-radius: 8px; }
.sorted { display: flex; align-items: center; gap: 10px; }
.icon.sort { width: 24px; height: 24px; color: #4a44e0; }
.name { display: flex; align-items: center; gap: 17px; }
.name a { letter-spacing: .1px; text-decoration: underline; text-decoration-thickness: 2px; text-underline-offset: 3px; text-decoration-skip-ink: none; }
.name .loose { letter-spacing: 1.2px; }
.name .tight { letter-spacing: -.3px; }
.icon.open { width: 35px; height: 35px; }
.add-tag { display: flex; padding-left: 9px; }
.tag { display: inline-flex; align-items: center; height: 51px; padding: 0 11px; border-radius: 10px; background: #352c1e; color: #f8cf7c; font-size: 27px; font-weight: 500; letter-spacing: -.4px; }
.when { display: flex; flex-direction: column; padding-top: 2px; line-height: 42px; }
.when b { font-weight: 400; }
.when small { color: #97989b; font-size: inherit; letter-spacing: .4px; }
.actions { display: flex; gap: 42px; }

.pager { display: flex; align-items: center; justify-content: flex-end; padding: 25px 16px 0 0; height: 101px; }
.range { color: #98999c; font-size: 25px; letter-spacing: 1px; }
.pager .icon { color: #4a4b4f; }
.prev { margin: 0 34px; }
.size { display: flex; align-items: center; justify-content: center; width: 177px; height: 76px; margin-right: 33px; border: 2px solid #29292d; border-radius: 16px; background: #121216; font-size: 30px; letter-spacing: -.5px; }

/* Floating layer */
.tooltip { position: absolute; left: 493px; top: 726px; display: flex; align-items: center; width: 473px; height: 66px; padding: 2px 0 0 25px; border-radius: 12px; background: #121216; box-shadow: 0 0 46px rgba(255, 255, 255, 0.035); font-size: 26px; letter-spacing: .07px; white-space: nowrap; }
.mark-box { position: absolute; left: 768px; top: 810px; width: 50px; height: 62px; border: 5px solid #e60d0d; }
.mark-arrow { position: absolute; left: 845px; top: 840px; width: 336px; height: 26px; fill: none; stroke: #fb0007; stroke-width: 5; }
.mark-arrow .tip { fill: #fb0007; stroke: none; }
```
